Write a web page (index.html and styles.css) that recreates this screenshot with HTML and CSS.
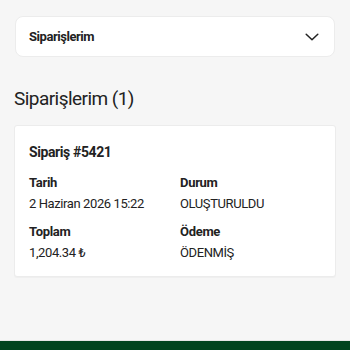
FILE: index.html
```html
<!DOCTYPE html>
<html lang="tr">
<head>
<meta charset="utf-8">
<link rel="stylesheet" href="styles.css">
</head>
<body>
<div class="page">
  <div class="dropdown">
    <span class="dropdown-label">Siparişlerim</span>
    <svg class="chevron" width="14" height="8" viewBox="0 0 14 8"><path d="M1.2 1.2l5.8 5.6 5.8-5.6" fill="none" stroke="#222" stroke-width="1.5" stroke-linecap="round" stroke-linejoin="round"/></svg>
  </div>
  <h1 class="title">Siparişlerim (1)</h1>
  <div class="order">
    <div class="order-id">Sipariş #5421</div>
    <div class="grid">
      <div class="field">
        <div class="label">Tarih</div>
        <div class="value">2 Haziran 2026 15:22</div>
      </div>
      <div class="field">
        <div class="label">Durum</div>
        <div class="value">OLUŞTURULDU</div>
      </div>
      <div class="field">
        <div class="label">Toplam</div>
        <div class="value">1,204.34 ₺</div>
      </div>
      <div class="field">
        <div class="label">Ödeme</div>
        <div class="value">ÖDENMİŞ</div>
      </div>
    </div>
  </div>
</div>
<div class="footer"></div>
</body>
</html>
```
FILE: styles.css
```css
html, body {
  margin: 0;
  padding: 0;
  height: 100%;
}
body {
  background: #f6f6f6;
  font-family: Roboto, "Noto Sans", sans-serif;
  color: #222;
  display: flex;
  flex-direction: column;
  overflow: hidden;
}
.page {
  flex: 1;
  padding: 16px 14px 0 14px;
}
.dropdown {
  background: #fff;
  border: 1px solid #ececec;
  border-radius: 8px;
  height: 41px;
  box-sizing: border-box;
  margin: 0 1px;
  padding: 0 15px 0 13px;
  display: flex;
  align-items: center;
  justify-content: space-between;
}
.dropdown-label {
  font-weight: 700;
  font-size: 13px;
  line-height: 18px;
  letter-spacing: -0.45px;
}
.chevron {
  display: block;
}
.title {
  font-weight: 400;
  font-size: 19px;
  letter-spacing: -0.55px;
  line-height: 26px;
  margin: 29px 0 0 0;
}
.order {
  background: #fff;
  border: 1px solid #ececec;
  border-radius: 3px;
  margin-top: 13px;
  padding: 16px 15px 14px 14px;
  box-shadow: 0 1px 1px rgba(0,0,0,0.03);
}
.order-id {
  font-weight: 700;
  font-size: 14px;
  line-height: 20px;
  letter-spacing: -0.4px;
}
.grid {
  display: grid;
  grid-template-columns: 151px 1fr;
  row-gap: 10px;
  margin-top: 11.5px;
}
.label {
  font-weight: 700;
  font-size: 13px;
  line-height: 18px;
  letter-spacing: -0.3px;
}
.value {
  font-size: 13px;
  line-height: 18px;
  letter-spacing: -0.4px;
  margin-top: 3px;
}
.footer {
  height: 9px;
  background: #01441f;
  border-top: 1px solid #e6e6e6;
}
```
